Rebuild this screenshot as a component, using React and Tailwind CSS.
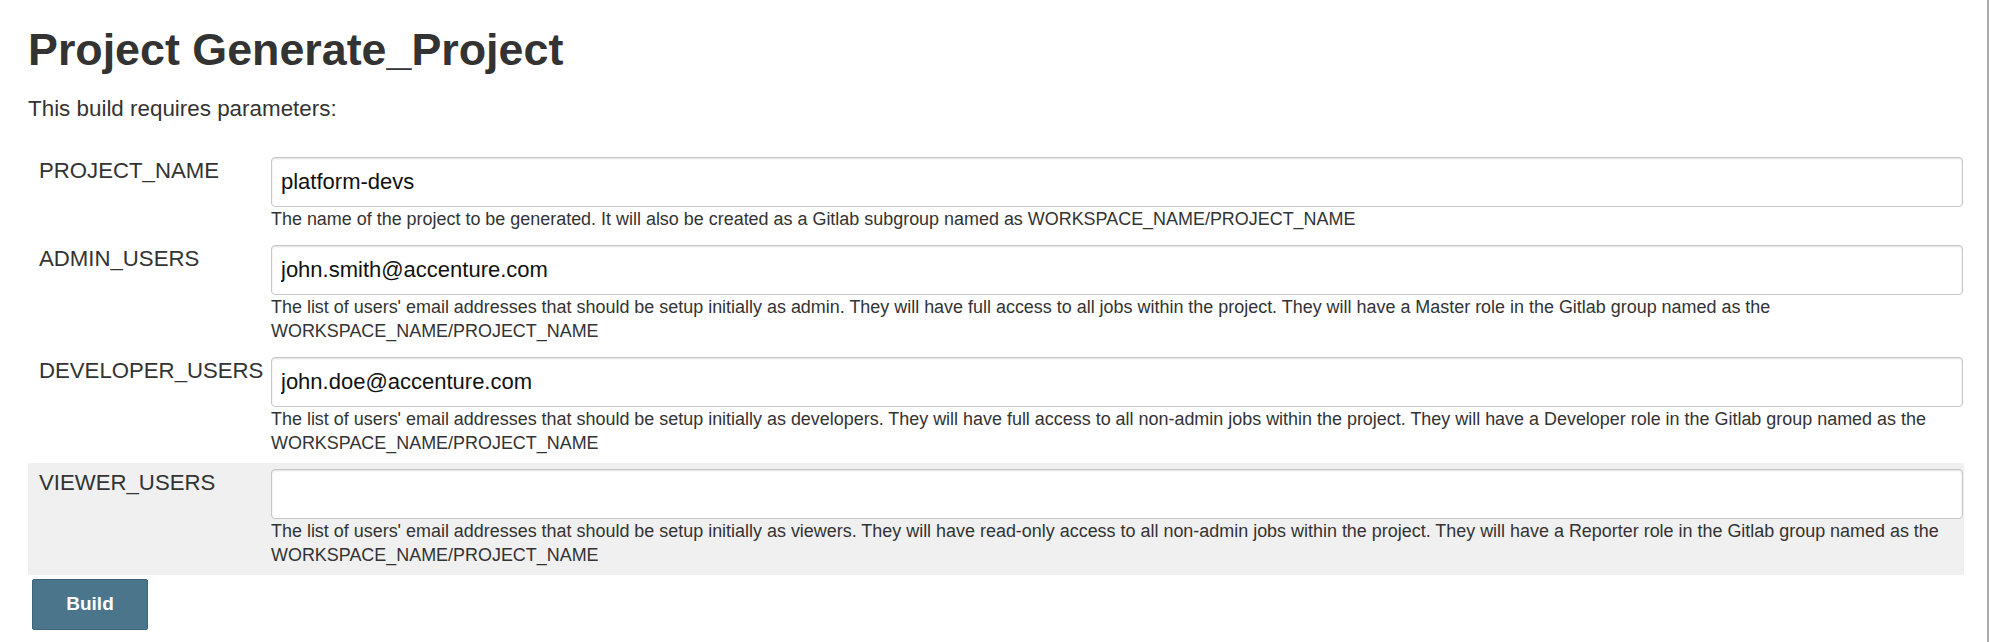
import React from 'react';

const params = [
    {
        name: 'PROJECT_NAME',
        value: 'platform-devs',
        desc: 'The name of the project to be generated. It will also be created as a Gitlab subgroup named as WORKSPACE_NAME/PROJECT_NAME',
    },
    {
        name: 'ADMIN_USERS',
        value: 'john.smith@accenture.com',
        desc: "The list of users' email addresses that should be setup initially as admin. They will have full access to all jobs within the project. They will have a Master role in the Gitlab group named as the WORKSPACE_NAME/PROJECT_NAME",
    },
    {
        name: 'DEVELOPER_USERS',
        value: 'john.doe@accenture.com',
        desc: "The list of users' email addresses that should be setup initially as developers. They will have full access to all non-admin jobs within the project. They will have a Developer role in the Gitlab group named as the WORKSPACE_NAME/PROJECT_NAME",
    },
    {
        name: 'VIEWER_USERS',
        value: '',
        desc: "The list of users' email addresses that should be setup initially as viewers. They will have read-only access to all non-admin jobs within the project. They will have a Reporter role in the Gitlab group named as the WORKSPACE_NAME/PROJECT_NAME",
        highlight: true,
    },
];

const ParamRow = ({ param }) => (
    <div className={`flex pt-[6px] pb-[8px] ${param.highlight ? 'bg-[#f0f0f0]' : ''}`}>
        <div className="w-[243px] shrink-0 pl-[11px] text-[22.2px] leading-[28px] text-[#333]">{param.name}</div>
        <div className="flex-1 pr-[1px]">
            <input
                type="text"
                defaultValue={param.value}
                className="block w-full h-[50px] px-[9px] bg-white border border-[#c6c6c6] rounded-[4px] shadow-[inset_0_1px_2px_rgba(0,0,0,0.12)] text-[22px] text-[#111] outline-none"
            />
            <div className="text-[17.95px] leading-[24px] text-[#333]">{param.desc}</div>
        </div>
    </div>
);

export default function App() {
    return (
        <div className="flex min-h-[642px] bg-white font-['Liberation_Sans',Arial,sans-serif] text-[#333]">
            <div className="w-[1987px] pl-[28px] pr-[23px]">
                <h1 className="pt-[23px] text-[44.8px] font-bold leading-[52px] text-[#333]">Project Generate_Project</h1>
                <p className="mt-[20px] text-[22.4px] leading-[28px]">This build requires parameters:</p>
                <div className="mt-[28px]">
                    {params.map(p => <ParamRow key={p.name} param={p} />)}
                </div>
                <button className="mt-[4px] ml-[4px] w-[116px] h-[51px] bg-[#4b758b] border border-[#3d6376] rounded-[2px] text-white text-[19px] font-bold">
                    Build
                </button>
            </div>
            <div className="w-[2px] bg-[#a9a9a9]" />
        </div>
    );
}
